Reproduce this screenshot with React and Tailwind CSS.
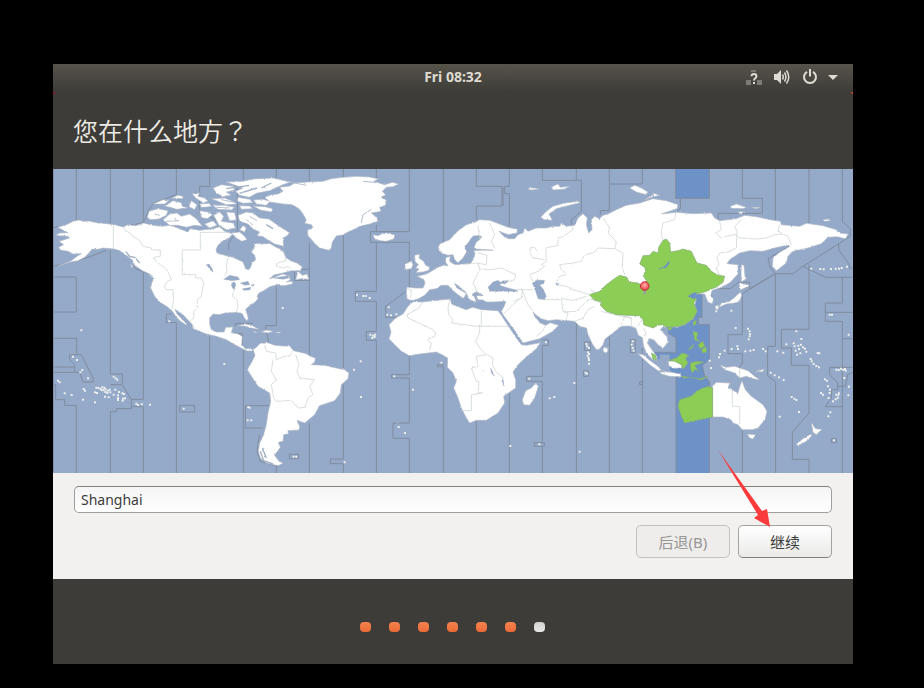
import { useState } from 'react';

const zoneLines = [
  'M1 3V915M70 0V155M0 295L100 270L160 247M0 180L15 175M0 327H70V432H0',
  'M0 511H71V560H50V575L65 590V613H0M0 597H65M0 650H8V695H35V712H70V915M71 560H85L120 630V642H90L80 613H65',
  'M172 0V165M172 248V618H208V650L235 695V722H190V731H172V915M208 650H172',
  'M210 177L271 164L288 125L302 105L370 80V0M271 0V164M271 310V694H235M235 716H271V915',
  'M235 290L250 303L290 318M355 438H340V464H370V915M380 712H425V732H380Z',
  'M470 0V55H440V135L470 145L527 180M470 505V915M571 0V35M571 547V915M548 474V466H600',
  'M553 40V190L527 225V245M650 713H577V780H628M530 497H568V530',
  'M670 0V40M670 230V190M670 355V473H637L648 530M670 895V915M725 304H769M725 310V337H769',
  'M769 0V40M769 225V570M769 765V915M709 859H737V872H709ZM620 800L612 850L622 880L676 896',
  'M871 0V30M871 200V605M871 650V873H832V887H871V915',
  'M970 0V30M970 170V191M970 223V370H907V400H970V490H940V517H970V915',
  'M1069 0V191H952V223H1069V362L998 415V448H1030M1069 560V620H1015V630H1069V765H1020V811H1069V915',
  'M1171 0V230M1171 590H1153V596H1171V915',
  'M1270 0V55H1347V114H1270V155M1270 760V915',
  'M1369 0V55H1355V77H1369V175M1369 675V915M1350 55V114',
  'M1468 0V37H1585V130L1555 155V172M1468 515H1486V532H1470M1468 532V625H1420V640H1468V824H1444V835H1474V824H1468M1468 835V915',
  'M1570 0V37M1570 460V915M1594 522H1612V547H1594ZM1591 608H1606V625H1591Z',
  'M1669 0V128H1642V140M1669 48H1768V0M1669 505V915M1732 515H1747V554H1732Z',
  'M1768 540V915M1760 642H1768V650H1760Z',
  'M1882 91V122L1870 130M2068 0V91H2128V136H1996V155M2167 0V155M2268 0V165',
  'M2167 317V535H2144V623L2168 642V915M2268 235V205M2268 290V484H2185V540H2215V592H2268V735L2218 793V874H2268V915',
  'M2368 0V160L2392 182V205L2250 295L2220 317H2167L2068 377V500H2025V557H2068V585L2058 600M2068 785V915',
  'M2213 232L2145 272L2152 300L2167 317L2090 362V343H2056L2032 362H1985M2250 295L2318 328H2400',
  'M2357 225V245L2390 292V300H2400M2368 328V405H2317V460H2368V915M2317 433H2400M2368 512H2400',
  'M2400 598H2330V620L2354 645V665H2335V690L2317 716H2370M2400 613L2384 620L2377 655H2354M2335 812H2350V824H2335Z',
  'M1845 495L1869 510V553H1800M1968 575L1948 592L1955 625L1969 640',
];

const land = [
  // North and Central America
  'M15 178L40 170L60 160L78 156L90 160L110 159L135 165L160 167L185 170L210 177L225 170L248 173L272 165L300 172L325 175L352 172L385 184L404 192L412 182L440 187L480 182L500 176L515 190L540 198L528 210L510 218L495 232L489 245L492 255L515 262L540 268L570 282L577 300L585 306L592 300L597 285L608 275L605 262L595 252L603 240L605 226L625 228L650 226L668 237L682 243L693 255L700 270L715 279L732 285L748 297L742 308L715 308L690 315L662 321L650 333L668 326L690 318L708 324L712 336L700 342L718 340L718 348L685 355L678 349L650 356L632 368L618 375L612 385L615 393L604 404L590 413L578 424L583 440L586 452L582 458L574 450L568 437L555 433L540 434L520 434L498 440L480 438L470 450L470 468L475 485L490 492L513 492L518 478L540 477L535 494L556 498L568 506L566 530L578 543L590 541L600 545L598 549L583 549L560 538L540 527L520 515L490 505L460 498L435 488L420 482L418 470L405 456L390 440L378 432L366 424L372 438L388 454L402 468L400 471L384 461L370 447L360 432L345 418L320 402L305 385L293 360L296 345L303 330L290 318L268 308L245 292L238 276L218 260L200 248L183 243L150 240L135 244L118 243L108 254L95 268L75 278L50 283L15 294L55 278L72 265L85 257L60 258L45 250L22 246L17 238L32 230L18 220L50 210L44 205L8 202L20 195L45 194L28 186Z',
  'M286 318L304 330L296 328ZM232 288L242 296L236 298Z',
  // Arctic archipelago
  'M288 130L315 122L345 128L340 142L318 153L292 155L283 148Z',
  'M300 108L330 95L348 97L335 108ZM335 115L360 98L385 104L388 115L405 120L370 124L352 118ZM355 90L375 82L392 85L388 92Z',
  'M330 155L350 138L372 135L385 145L410 138L430 152L448 175L425 172L400 178L375 172L350 172Z',
  'M408 116L415 98L432 110L425 125ZM418 78L440 75L435 85L455 90L465 100L450 104L428 90ZM440 128L465 132L478 140L462 153L445 148Z',
  'M480 60L505 50L540 55L545 66L520 72L535 82L510 86L490 75ZM475 92L515 90L535 98L552 108L520 110L500 102ZM478 112L515 112L545 118L535 126L495 124Z',
  'M482 142L500 132L512 145L505 160L540 165L548 180L520 185L498 172ZM520 42L570 40L600 33L660 30L712 42L690 50L650 68L610 76L590 88L560 82L548 70L570 60Z',
  'M556 88L590 94L600 104L570 106L552 99ZM560 113L590 114L600 122L565 124ZM535 195L560 192L575 205L582 215L566 220L550 210ZM570 172L580 180L575 192L560 186Z',
  'M602 96L630 94L652 100L640 112L610 108ZM600 114L636 116L660 122L655 132L622 126ZM520 132L545 134L550 156L530 158ZM455 168L480 158L492 172L470 180ZM440 108L470 106L472 116L445 118Z',
  'M555 142L580 132L600 135L620 150L648 153L672 170L690 182L710 194L700 205L690 210L692 235L665 228L645 216L630 206L612 203L620 192L600 183L585 168L560 160Z',
  // Greenland
  'M680 58L710 54L725 45L765 42L810 40L835 32L870 28L910 25L950 27L976 33L962 40L995 50L1018 43L1037 48L1020 56L1000 58L988 70L998 80L984 88L1000 96L998 112L980 118L984 130L955 135L970 148L975 160L950 168L920 175L908 182L885 192L868 201L850 204L838 222L835 240L828 247L800 240L785 226L765 203L763 187L780 180L775 170L755 166L760 156L750 138L738 122L718 110L690 108L650 102L636 87L655 80L675 78L690 70Z',
  // Iceland, Britain, Ireland
  'M960 200L975 203L985 198L1010 196L1026 202L1022 213L1000 220L982 218L965 213Z',
  'M1085 262L1100 258L1098 270L1112 280L1118 292L1130 297L1128 307L1110 312L1088 314L1098 303L1088 300L1096 290L1086 280ZM1057 288L1075 279L1080 290L1075 302L1055 305Z',
  // Eurasia
  'M1062 357L1085 360L1110 360L1116 345L1113 335L1092 325L1120 318L1135 310L1150 300L1170 292L1185 293L1178 283L1178 270L1192 264L1190 280L1205 290L1235 288L1252 287L1262 272L1266 256L1262 248L1290 246L1320 247L1270 243L1262 238L1265 225L1280 215L1286 206L1270 203L1250 222L1235 235L1242 250L1230 270L1215 284L1205 275L1200 260L1185 262L1165 255L1155 240L1160 228L1190 215L1215 188L1240 170L1265 163L1280 155L1310 157L1340 168L1365 178L1393 184L1392 195L1365 200L1338 190L1352 205L1365 212L1385 212L1395 200L1410 195L1415 180L1425 190L1450 180L1480 180L1500 175L1520 175L1525 165L1540 175L1565 172L1575 150L1590 137L1603 150L1600 170L1607 195L1617 185L1615 155L1625 145L1640 152L1650 142L1665 138L1690 125L1720 112L1760 105L1800 92L1840 98L1875 110L1872 122L1825 138L1870 133L1920 137L1975 135L1985 150L2000 158L2050 152L2075 142L2110 146L2150 155L2182 160L2185 170L2240 175L2260 166L2310 173L2350 185L2360 195L2385 198L2378 212L2350 206L2325 208L2305 227L2265 240L2220 250L2205 265L2200 285L2170 308L2158 295L2160 270L2178 254L2210 235L2200 232L2165 240L2130 250L2090 248L2060 255L2030 275L2022 287L2055 290L2055 318L2030 345L2000 360L1978 367L1972 382L1981 395L1978 407L1965 403L1955 378L1935 377L1905 385L1930 395L1925 410L1932 430L1920 452L1895 470L1870 478L1830 476L1822 485L1842 506L1845 525L1830 540L1817 532L1802 515L1788 512L1783 525L1800 550L1812 566L1810 578L1797 573L1780 555L1772 535L1768 508L1756 502L1748 480L1728 474L1705 475L1690 487L1656 513L1650 530L1640 543L1630 545L1618 528L1605 500L1600 480L1580 475L1565 460L1510 455L1485 458L1465 452L1448 440L1440 432L1445 445L1462 465L1478 472L1492 464L1517 472L1500 490L1460 512L1410 525L1400 510L1378 478L1350 440L1345 430L1355 412L1358 400L1320 402L1300 402L1290 396L1275 395L1270 384L1285 378L1268 372L1258 378L1266 390L1270 402L1250 396L1238 372L1218 355L1203 344L1212 360L1240 376L1232 392L1222 385L1200 368L1185 352L1165 352L1150 362L1130 365L1115 382L1095 393L1075 398L1062 392L1060 370Z',
  // Africa and Madagascar
  'M1065 415L1080 401L1110 402L1150 397L1192 393L1196 408L1215 416L1240 425L1258 418L1285 425L1335 428L1345 442L1370 480L1390 510L1405 530L1420 532L1462 524L1450 542L1420 567L1395 590L1380 612L1388 635L1388 660L1352 685L1355 705L1335 735L1300 757L1270 757L1250 765L1240 750L1225 720L1215 690L1202 660L1210 640L1200 615L1183 598L1184 570L1170 562L1150 552L1100 558L1070 563L1045 550L1025 530L1008 512L1014 492L1008 470L1028 450L1050 438Z',
  'M1448 645L1456 655L1445 690L1430 712L1412 710L1408 695L1418 668L1435 660Z',
  'M1652 537L1663 540L1665 550L1657 555L1650 548Z',
  // South America
  'M600 545L612 536L620 527L645 524L665 532L690 534L710 534L722 548L760 557L772 565L787 570L785 582L775 590L815 592L850 600L875 605L888 615L885 632L865 650L862 675L845 698L800 713L785 740L755 765L732 757L740 775L738 786L705 788L706 797L692 800L690 820L676 823L682 838L665 862L678 880L690 886L675 893L640 885L622 870L616 848L620 825L632 800L640 770L645 735L653 700L650 675L615 655L600 632L583 605L600 575L606 562Z',
  // Caribbean
  'M555 474L575 467L598 473L618 484L598 481L575 474ZM625 492L640 486L662 490L645 495ZM670 492H682V495H670ZM602 490L614 493L604 494Z',
  'M728 335L735 310L748 322L762 318L768 334L745 332Z',
  // Japan, Sakhalin, Kuril
  'M2065 290L2073 292L2076 325L2080 332L2065 342L2064 315ZM2058 345L2090 352L2075 360L2062 366ZM2062 372L2066 382L2060 400L2045 405L2020 408L1998 418L2005 405L2030 400L2045 388ZM1986 415L1998 412L1995 425L1988 423Z',
  // Novaya Zemlya, Severnaya Zemlya, Svalbard
  'M1577 100L1580 104L1545 113L1510 122L1488 138L1498 157L1475 155L1463 148L1480 130L1500 115L1535 105Z',
  'M1730 60L1745 52L1765 60L1785 72L1780 80L1750 72ZM1775 95L1800 80L1800 86ZM1800 75L1820 82L1802 86ZM1425 60L1445 60L1460 64L1432 66ZM1495 57L1515 48L1522 58L1550 55L1535 63L1500 66Z',
  'M2032 115L2050 108L2080 118L2070 122L2035 121ZM2095 118L2122 118L2110 122ZM2055 130L2075 132L2060 137ZM2310 155L2328 153L2332 158L2315 160Z',
  // Indonesia and New Guinea
  'M1755 557L1770 560L1790 577L1815 595L1828 610L1815 608L1790 590ZM1820 612L1850 612L1882 618L1885 626L1850 625L1825 618Z',
  'M1845 580L1865 578L1888 592L1886 600L1862 601L1848 594Z',
  'M2000 590L2018 598L2045 595L2085 608L2105 625L2122 636L2100 632L2080 625L2060 630L2045 615L2015 605ZM2110 610L2135 603L2128 612Z',
  // Australia, Tasmania, New Zealand
  'M1978 655L1990 643L2030 645L2026 660L2055 675L2062 650L2067 638L2077 665L2095 685L2130 710L2142 730L2136 755L2115 780L2098 785L2068 785L2055 770L2040 765L2034 755L2010 747L1978 747Z',
  'M2083 798L2108 800L2100 813L2090 810ZM2275 765L2288 782L2307 784L2290 800L2280 793ZM2278 800L2265 817L2235 833L2230 828L2250 812L2270 800Z',
];

const water = [
  'M1305 358L1320 342L1335 337L1345 345L1340 352L1365 360L1390 366L1395 370L1340 370L1310 370Z',
  'M1340 345L1350 338L1368 338L1355 348ZM1273 382L1288 378L1290 384Z',
  'M1438 345L1450 337L1475 337L1472 347L1460 350L1472 365L1480 385L1475 395L1455 392L1448 370Z',
  'M1508 346L1518 347L1512 353ZM1255 210L1262 203L1285 205L1270 222L1260 245L1245 255L1235 240Z',
  'M460 290L468 288L478 303L480 313L472 305ZM512 334L530 322L555 327L560 335L535 338ZM536 345L548 342L545 365L538 360ZM562 345L585 340L590 350L575 352ZM568 362L595 358L590 366L572 367ZM594 352L604 348L600 355Z',
  'M1350 632L1353 655L1347 640ZM1313 600L1320 615L1325 625L1315 615ZM660 330L705 323L708 330L690 334Z',
  'M1030 755L1038 750L1036 768L1030 764Z',
];

const borders = [
  'M181 170V243M212 178L216 188L232 195L240 207L258 215L270 235L295 240L297 246H322V265L303 267L310 282L330 295L345 310L355 335L343 340L333 355L340 365H360L362 395L356 425',
  'M528 195V193H442V246H388V320H428V330H445L452 345L445 385L433 395V420L422 430V450L410 460L425 480',
  'M525 270L520 290L522 310L515 325M545 360L538 385L552 395L555 415L550 432M690 245L695 262L700 278L672 285L670 295L695 300L705 295L712 300',
  'M1063 362L1075 365L1073 390M1110 400L1098 420L1062 440L1065 450L1140 485L1148 495L1145 505L1122 515L1135 525L1130 550',
  'M1190 395L1185 420L1187 440L1200 455L1195 465L1270 475H1285V428M1285 475H1368M1280 475V495L1268 520L1280 540L1300 560L1320 570L1318 590L1328 610L1350 630M1300 560L1270 565L1275 595L1255 600L1270 640H1278L1275 675H1290L1255 680V728H1225',
  'M1275 172L1280 215M1310 165L1325 200L1315 220L1325 240M1235 288L1270 285L1300 290L1302 262L1275 255M1275 285L1280 305L1260 345L1275 375M1280 303L1310 305L1345 300L1388 320L1385 335L1370 340M1390 365L1440 365',
  'M1556 172L1560 185L1530 205L1515 210V232L1478 240L1480 280L1465 290L1475 295L1455 310L1430 320L1440 340M1432 240L1430 255L1440 270L1475 275M1452 250L1445 238L1430 240',
  'M1512 350L1540 355L1560 365L1595 375L1610 382M1510 345L1520 325L1540 320L1525 305L1520 290L1560 285L1585 280L1595 260L1620 255L1635 240L1685 242L1690 225L1680 210L1665 195L1670 180L1650 150',
  'M1685 242L1710 255L1708 300L1716 322M1610 382L1625 372L1610 365M1525 392L1530 430L1545 435L1540 455M1525 392L1560 397L1600 385M1530 432L1570 430L1590 410L1610 392L1642 405M1470 395L1520 395M1405 362L1415 385L1425 410L1440 430M1380 400L1405 390L1408 368M1350 440L1380 410L1400 392',
  'M1565 460L1590 450L1605 425L1625 415M1645 430L1705 445L1735 450L1715 445L1705 470M1735 450V475L1748 480M1770 450L1755 475M1478 472L1468 490L1450 505M1772 480L1780 500L1770 505',
  'M1870 125L1865 155L1830 165L1825 190L1828 215M2000 160L2005 185L1988 195L2005 210L2020 205L2048 200L2060 210L2110 213L2140 210L2165 200L2190 198L2205 205L2215 232M2065 155L2045 175L2052 190L2050 240L2025 252L2000 255L1992 270L1998 290L1990 300L1998 320M2180 170L2175 190L2190 198',
  'M635 532L640 550L668 555L670 575L695 565H710L720 548M660 575L655 610L670 635L655 650L662 690L670 700L715 697L735 720L755 718L765 690L780 680L770 655L785 635L740 630L732 610L738 590L728 560',
  'M2038 660V715H2060V768M2060 600V625M1978 655V747',
];

const green = [
  'M1610 380L1640 370L1658 352L1680 335L1700 322L1722 328L1728 342L1755 345L1772 356L1780 338L1770 322L1778 310L1775 298L1760 288L1770 263L1790 262L1800 250L1815 255L1817 238L1830 217L1840 213L1850 225L1853 252L1875 248L1890 243L1915 250L1922 265L1932 285L1960 292L1975 310L1992 320L2015 325L2010 343L1990 357L1955 372L1930 378L1905 385L1930 393L1922 405L1932 430L1922 450L1895 470L1865 477L1838 476L1828 470L1815 472L1800 480L1785 475L1772 470L1770 453L1755 443L1720 442L1690 440L1660 430L1642 412L1645 402L1622 395Z',
  'M1880 695L1915 685L1930 670L1950 660L1965 655L1979 660V747L1940 755L1895 765L1885 745L1875 715Z',
  'M1920 462L1930 457L1928 470L1922 472ZM1843 478L1858 480L1850 488ZM1848 577L1870 570L1888 555L1908 562L1898 572L1905 585L1890 603L1886 590L1865 580ZM1795 555L1808 562L1810 577L1800 573Z',
  'M1913 585L1932 580L1952 583L1930 590L1925 593L1938 610L1925 603L1918 615L1912 600ZM1920 490L1935 495L1930 510L1940 522L1925 515ZM1935 530L1950 520L1955 535L1942 542ZM1905 545L1922 530L1918 540ZM1945 545L1960 537V552L1950 555ZM1885 625L1908 628L1895 631ZM1912 628L1940 632L1965 625L1945 636Z',
];

// x, y pairs of the islands that are too small for an outline
const islets = [
  [60, 566], [72, 576], [88, 606], [82, 613], [105, 631], [15, 638], [20, 643], [35, 676], [56, 681], [92, 663], [96, 668],
  [90, 695], [126, 673], [132, 675], [126, 703], [130, 659], [136, 660], [142, 662], [148, 658], [154, 659], [146, 666],
  [152, 667], [158, 664], [164, 668], [170, 665], [157, 672], [163, 675], [172, 673], [187, 665], [198, 672],
  [182, 680], [195, 682], [208, 676], [213, 678], [156, 686], [167, 688], [195, 690], [195, 696], [210, 692], [216, 691],
  [209, 698], [182, 626], [188, 631], [193, 635], [250, 707], [255, 711], [266, 709], [291, 710], [85, 487], [349, 460],
  [392, 722], [514, 588], [586, 717], [590, 719], [584, 757], [595, 757], [689, 420], [912, 380], [931, 384], [938, 384],
  [950, 390], [1007, 418], [1003, 440], [1014, 442], [1030, 439], [952, 500], [960, 503], [966, 500], [965, 507], [958, 510],
  [923, 580], [903, 605], [924, 687], [1024, 625], [1080, 665], [1037, 777], [1056, 795], [1165, 584], [722, 866], [730, 866],
  [875, 883], [1290, 608], [1479, 523], [1429, 632], [1490, 691], [1504, 687], [1459, 829], [1372, 834],
  [1580, 851], [1600, 528], [1603, 535], [1608, 540], [1605, 553], [1608, 558], [1604, 563], [1607, 570], [1608, 576],
  [1608, 587], [1598, 614], [1602, 617], [1739, 520], [1736, 530], [1739, 540], [1742, 548], [1564, 645],
  [2048, 480], [2085, 482], [2090, 490], [2091, 498], [2090, 505], [2087, 514], [2036, 543], [2053, 535], [2055, 543],
  [2077, 550], [2092, 548], [2102, 546], [2130, 543], [2138, 550], [2173, 550], [2191, 554], [2001, 558], [1998, 568],
  [2015, 548], [2222, 526], [2230, 490], [2245, 513], [2225, 535], [2236, 533], [2238, 543], [2250, 538], [2256, 542],
  [2200, 529], [2228, 548], [2242, 556], [2232, 560], [2260, 551], [2244, 530], [2294, 555], [2299, 556], [2273, 573],
  [2276, 580], [2282, 588], [2290, 594], [2298, 598], [2316, 634], [2322, 638], [2304, 675], [2310, 680], [2325, 655],
  [2331, 665], [2330, 675], [2327, 690], [2340, 700], [2350, 680], [2356, 682], [2354, 690], [2358, 676], [2348, 694],
  [2350, 605], [2357, 606], [2364, 602], [2370, 605], [2376, 603], [2378, 608], [2374, 630], [2386, 682], [2388, 656],
  [2387, 500], [2332, 733], [2326, 745], [2238, 732], [2180, 746], [2343, 817], [2330, 440], [2337, 440], [2275, 302],
  [2302, 303], [2312, 304], [2334, 303], [2348, 302], [2358, 302], [2366, 300], [2382, 296], [2216, 687], [2224, 692],
  [2230, 696], [2153, 614], [2165, 622], [2178, 628], [2192, 636], [1990, 430], [2035, 428], [1974, 600], [1970, 578],
];

function WorldMap() {
  return (
    <svg viewBox="0 3 2400 912" className="block w-full h-auto bg-[#95a9c9]" role="img" aria-label="World time zone map">
      <defs>
        <filter id="coast" x="0" y="0" width="100%" height="100%">
          <feTurbulence type="fractalNoise" baseFrequency="0.16" numOctaves="2" seed="4" result="noise" />
          <feDisplacementMap in="SourceGraphic" in2="noise" scale="6" xChannelSelector="R" yChannelSelector="G" />
        </filter>
        <radialGradient id="pin" cx="0.5" cy="0.4" r="0.6">
          <stop offset="0" stopColor="#ffb0b0" />
          <stop offset="0.6" stopColor="#f56868" />
          <stop offset="1" stopColor="#e04048" />
        </radialGradient>
      </defs>

      <g fill="#6d92c7">
        <path d="M1868 3H1969V91H1868Z" />
        <path d="M1931 370H1947V448H1936V470H1969V575L1948 592L1955 625L1969 640V915H1869V625L1850 605V560H1820V575L1800 560V553H1869V510L1845 495V470L1905 450L1890 385Z" />
      </g>
      <g fill="none" stroke="#808ca0" strokeWidth="3">
        {zoneLines.map((d) => <path key={d} d={d} />)}
        <path d="M1868 3V91H1969V3M1947 375V448H1936V470H1969V575M1969 640V915M1869 625V915" />
      </g>

      <g filter="url(#coast)">
        <g fill="#fff" stroke="#b0bac5" strokeWidth="2">
          {land.map((d) => <path key={d} d={d} />)}
        </g>
        <g fill="#95a9c9" stroke="#a3adbb" strokeWidth="1">
          {water.map((d) => <path key={d} d={d} />)}
        </g>
        <g fill="none" stroke="#c6cfcd" strokeWidth="2">
          {borders.map((d) => <path key={d} d={d} />)}
        </g>
        <g fill="#8bcd55" stroke="#86a97c" strokeWidth="2">
          {green.map((d) => <path key={d} d={d} />)}
        </g>
        <path d="M1812 304L1835 295L1850 277L1848 288L1838 300Z" fill="#6d92c7" />
        <path d="M1905 385L1918 376L1932 372L1928 383L1933 390L1920 392Z" fill="#6d92c7" />
        <path d="M218 250L230 265L245 268L260 285M210 256L228 272M625 60L655 45M520 62L590 52M560 76L612 60M640 170L660 182M628 840L640 870M622 850L632 878L660 888" fill="none" stroke="#9fb0c4" strokeWidth="4" />
        <path d="M340 160L378 158M365 150L372 160M305 138L320 142M505 95L540 102M490 118L530 120M590 145L612 158M580 155L600 172M700 40L760 52M930 40L970 44M925 165L930 140L955 125" fill="none" stroke="#b4c0d2" strokeWidth="3" />
      </g>
      <g fill="#eef2ee">
        {islets.map(([x, y]) => <rect key={`${x}-${y}`} x={x - 3} y={y - 3} width="6" height="6" rx="1" />)}
      </g>

      <path d="M1775 366V379" stroke="#9a9fa4" strokeWidth="7" />
      <circle cx="1775" cy="354" r="13" fill="url(#pin)" stroke="#c82a35" strokeWidth="3" />
    </svg>
  );
}

function TopBar() {
  return (
    <header className="relative h-7 grid grid-cols-[1fr_auto_1fr] items-center bg-linear-to-b from-[#56534a] to-[#3d3c38] text-[#dfdbd2]">
      <span />
      <time className="text-[14px] leading-6 pb-0.5 font-bold">Fri 08:32</time>
      <div className="flex items-center justify-end gap-2.5 pr-[15px] pb-0.5">
        <div className="flex items-center gap-3">
          <svg className="w-4 h-4" viewBox="0 0 16 16" aria-label="Network">
            <path d="M5 1H10V3H5ZM0 11H5V16H0ZM11 11H16V16H11Z" fill="#7e7b74" />
            <path d="M5.600 7.200Q5.600 5 8 5Q10.400 5 10.400 7.200Q10.400 8.500 9 9.500Q8 10.200 8 11.500M8 13V15" fill="none" stroke="#dfdbd2" strokeWidth="2" />
          </svg>
          <svg className="w-4 h-4" viewBox="0 0 16 16" aria-label="Volume">
            <path d="M0 5H3L7 1V15L3 11H0Z" fill="#dfdbd2" />
            <path d="M8.500 5.500Q10 8 8.500 10.500M10.500 3.500Q13.300 8 10.500 12.500M12.500 1.500Q17 8 12.500 14.500" fill="none" stroke="#dfdbd2" strokeWidth="1.500" />
          </svg>
          <svg className="w-4 h-4" viewBox="0 0 16 16" aria-label="Power">
            <path d="M5 2.800A6 6 0 1 0 11 2.800M8 0V7.500" fill="none" stroke="#dfdbd2" strokeWidth="2" />
          </svg>
        </div>
        <svg className="w-2.5 h-4" viewBox="0 0 10 16" aria-label="Menu">
          <path d="M0 6H10L5 11Z" fill="#dfdbd2" />
        </svg>
      </div>
      <svg className="absolute top-full right-0 w-1 h-1" viewBox="0 0 4 4" aria-hidden="true">
        <path d="M0 0H4V4Q4 0 0 0Z" fill="#dd4814" />
      </svg>
      <svg className="absolute top-full left-0 w-1 h-1" viewBox="0 0 4 4" aria-hidden="true">
        <path d="M0 0H3L0 3Z" fill="#8c1f2b" />
      </svg>
    </header>
  );
}

export default function App() {
  const [city, setCity] = useState('Shanghai');
  const steps = [1, 2, 3, 4, 5, 6, 7];
  const current = 7;

  return (
    <div className="min-h-screen bg-black pt-16 pb-6 pl-[53px] pr-[71px] font-['Noto_Sans','Noto_Sans_CJK_SC',sans-serif]">
      <div className="bg-[#3d3c38]">
        <TopBar />
        <h1 className="px-5 pt-5 pb-[21px] text-[25px] leading-9 font-[350] text-[#eeebe4] font-['Noto_Sans_CJK_JP','Noto_Sans_CJK_SC',sans-serif]">您在什么地方？</h1>

        <WorldMap />

        <form className="bg-[#f2f1f0] px-[21px] pt-[13px] pb-[21px]" onSubmit={(e) => e.preventDefault()}>
          <input
            type="text"
            aria-label="City"
            value={city}
            onChange={(e) => setCity(e.target.value)}
            className="block w-full h-[27px] px-1.5 rounded-[5px] border border-[#a09e9b] border-t-[#85827e] bg-linear-to-b from-[#f5f5f5] to-white text-[14px] text-[#3c3c3c] outline-none"
          />
          <div className="flex justify-end gap-2 mt-3">
            <button type="button" disabled className="w-[94px] h-[33px] pt-0.5 rounded-[5px] border border-[#c3c1be] bg-[#eeedec] text-[15px] text-[#989693]">后退(B)</button>
            <div className="relative">
              <button type="submit" className="block w-[94px] h-[33px] pt-0.5 rounded-[5px] border border-[#a5a3a0] border-b-[#827f7b] bg-linear-to-b from-white to-[#ebeae9] text-[15px] text-[#3c3c3c]">继续</button>
              <svg className="absolute -left-5 -top-[75px] w-[54px] h-[78px] pointer-events-none" viewBox="718 450 54 78" aria-hidden="true">
                <path d="M718 450L762 511L767 509L770 527L754 518L758 515Z" fill="#fb3b3b" />
              </svg>
            </div>
          </div>
        </form>

        <ol className="flex justify-center gap-[18px] pt-[43px] pb-8 pr-px">
          {steps.map((step) => (
            <li
              key={step}
              aria-current={step === current ? 'step' : undefined}
              className={step === current
                ? 'w-[11px] h-2.5 rounded-[4px] bg-linear-to-b from-[#d2d2d0] to-[#e8e8e6]'
                : 'w-[11px] h-2.5 rounded-[4px] bg-linear-to-b from-[#f58350] to-[#ea6a35]'}
            />
          ))}
        </ol>
      </div>
    </div>
  );
}
